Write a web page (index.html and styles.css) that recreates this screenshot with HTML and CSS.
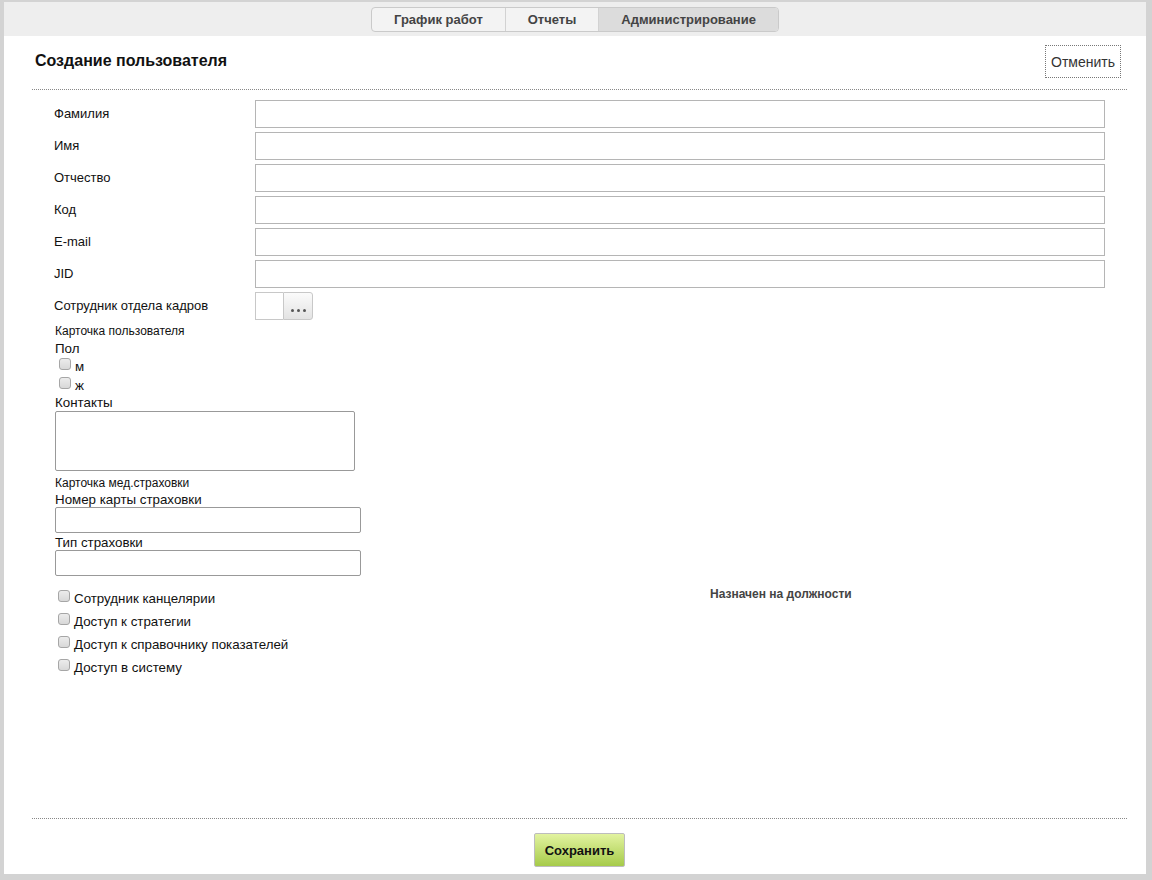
FILE: index.html
```html
<!DOCTYPE html>
<html lang="ru">
<head>
<meta charset="utf-8">
<title>Создание пользователя</title>
<link rel="stylesheet" href="styles.css">
</head>
<body>
<div class="page">
  <div class="topbar">
    <nav class="tabs">
      <a class="tab">График работ</a>
      <a class="tab">Отчеты</a>
      <a class="tab active">Администрирование</a>
    </nav>
  </div>
  <div class="content">
    <div class="head">
      <h1 class="title">Создание пользователя</h1>
      <button class="cancel">Отменить</button>
    </div>
    <div class="main">
      <div class="form">
        <div class="row"><label class="lbl">Фамилия</label><input class="field" type="text"></div>
        <div class="row"><label class="lbl">Имя</label><input class="field" type="text"></div>
        <div class="row"><label class="lbl">Отчество</label><input class="field" type="text"></div>
        <div class="row"><label class="lbl">Код</label><input class="field" type="text"></div>
        <div class="row"><label class="lbl">E-mail</label><input class="field" type="text"></div>
        <div class="row"><label class="lbl">JID</label><input class="field" type="text"></div>
        <div class="row"><label class="lbl">Сотрудник отдела кадров</label>
          <div class="picker"><span class="picker-box"></span><span class="picker-btn"><i></i><i></i><i></i></span></div>
        </div>
      </div>
      <div class="card">
        <div class="card-title">Карточка пользователя</div>
        <div class="card-label gap-pol">Пол</div>
        <div class="opts">
          <label class="opt"><input type="checkbox" class="cb">м</label>
          <label class="opt"><input type="checkbox" class="cb">ж</label>
        </div>
        <div class="card-label contacts">Контакты</div>
        <textarea class="area"></textarea>
        <div class="card-title gap-med">Карточка мед.страховки</div>
        <div class="card-label gap-small">Номер карты страховки</div>
        <input class="small-field" type="text">
        <div class="card-label gap-small">Тип страховки</div>
        <input class="small-field" type="text">
      </div>
      <div class="bottom">
        <div class="checks">
          <label class="check"><input type="checkbox" class="cb">Сотрудник канцелярии</label>
          <label class="check"><input type="checkbox" class="cb">Доступ к стратегии</label>
          <label class="check"><input type="checkbox" class="cb">Доступ к справочнику показателей</label>
          <label class="check"><input type="checkbox" class="cb">Доступ в систему</label>
        </div>
        <div class="posts">Назначен на должности</div>
      </div>
    </div>
    <div class="footer">
      <button class="save">Сохранить</button>
    </div>
  </div>
</div>
</body>
</html>
```

FILE: styles.css
```css
html, body {
  margin: 0;
  padding: 0;
}
body {
  background: #d3d3d3;
  font-family: "Liberation Sans", Arial, sans-serif;
  color: #111;
}
.page {
  margin: 2px 6px 0 4px;
  height: 872px;
  background: #fff;
  display: flex;
  flex-direction: column;
  box-sizing: border-box;
}
.topbar {
  height: 34px;
  background: #eeeeee;
  display: flex;
  justify-content: center;
  align-items: flex-start;
  padding-top: 5px;
  box-sizing: border-box;
}
.tabs {
  display: flex;
  height: 25px;
  box-sizing: border-box;
  border: 1px solid #cacaca;
  border-radius: 4px;
  overflow: hidden;
  background: #f3f3f3;
}
.tab {
  padding: 0 22px;
  font-weight: bold;
  font-size: 13px;
  line-height: 23px;
  color: #444;
  border-left: 1px solid #d2d2d2;
}
.tab:first-child {
  border-left: 0;
}
.tab.active {
  background: #dcdcdc;
}
.content {
  flex: 1;
  display: flex;
  flex-direction: column;
  padding: 0 19px 0 28px;
}
.head {
  height: 54px;
  box-sizing: border-box;
  display: flex;
  justify-content: space-between;
  align-items: flex-start;
  border-bottom: 1px dotted #888;
  padding-top: 9px;
}
.title {
  margin: 6px 0 0 3px;
  font-size: 16px;
  line-height: 20px;
  font-weight: bold;
  color: #111;
}
.cancel {
  margin: 0 6px 0 0;
  width: 76px;
  height: 33px;
  padding: 0;
  background: #fff;
  border: 1px dotted #777;
  font-family: "Liberation Sans", Arial, sans-serif;
  font-size: 14px;
  color: #333;
}
.main {
  flex: 1;
  padding: 10px 22px 0 22px;
}
.row {
  display: grid;
  grid-template-columns: 201px 1fr;
  align-items: center;
  height: 28px;
  margin-bottom: 4px;
}
.lbl {
  font-size: 13px;
  line-height: 15px;
  padding-bottom: 2px;
  color: #111;
}
.field {
  height: 28px;
  box-sizing: border-box;
  border: 1px solid #b5b5b5;
  margin: 0;
  padding: 2px 4px;
  font-size: 13px;
}
.picker {
  display: flex;
  height: 28px;
}
.picker-box {
  width: 28px;
  box-sizing: border-box;
  border: 1px solid #c8c8c8;
  border-right: 0;
  background: #fff;
}
.picker-btn {
  width: 30px;
  box-sizing: border-box;
  border: 1px solid #c8c8c8;
  border-radius: 0 3px 3px 0;
  background: linear-gradient(#fbfbfb, #e3e3e3);
  display: flex;
  align-items: flex-end;
  justify-content: center;
  gap: 3px;
  padding-bottom: 7px;
}
.picker-btn i {
  width: 3px;
  height: 3px;
  border-radius: 50%;
  background: #555;
}
.card {
  padding-left: 1px;
  margin-top: 1px;
}
.card-title {
  font-size: 12px;
  line-height: 14px;
}
.card-label {
  font-size: 13.33px;
  line-height: 15px;
}
.gap-pol {
  margin-top: 3px;
}
.gap-med {
  margin-top: 5px;
}
.gap-small {
  margin-top: 2px;
}
.opts {
  padding-top: 1px;
}
.opt {
  display: flex;
  align-items: center;
  height: 19px;
  font-size: 13.33px;
  line-height: 19px;
}
.contacts {
  margin-bottom: 1px;
}
.cb {
  appearance: none;
  -webkit-appearance: none;
  width: 12px;
  height: 12px;
  box-sizing: border-box;
  margin: 0 4px 0 4px;
  border: 1px solid #a6a6a6;
  border-radius: 3px;
  background: linear-gradient(#ececec, #d8d8d8);
}
.opt .cb {
  margin-top: -6px;
}
.area {
  display: block;
  width: 300px;
  height: 60px;
  box-sizing: border-box;
  margin: 0;
  border: 1px solid #999;
  border-radius: 2px;
  resize: none;
}
.small-field {
  display: block;
  width: 306px;
  height: 26px;
  box-sizing: border-box;
  margin: 0;
  border: 1px solid #999;
  border-radius: 2px;
}
.bottom {
  display: grid;
  grid-template-columns: 656px 1fr;
  margin-top: 11px;
}
.check {
  display: flex;
  align-items: center;
  height: 23px;
  font-size: 13.33px;
}
.check .cb {
  margin-top: -5px;
}
.posts {
  font-size: 12px;
  font-weight: bold;
  color: #444;
  margin-top: 0;
}
.footer {
  border-top: 1px dotted #888;
  height: 56px;
  box-sizing: border-box;
  display: flex;
  justify-content: center;
  padding-top: 14px;
}
.save {
  width: 91px;
  height: 34px;
  padding: 0;
  border: 1px solid #bdbdbd;
  border-radius: 2px;
  background: linear-gradient(#e2f3a0, #a6cb4a);
  font-family: "Liberation Sans", Arial, sans-serif;
  font-weight: bold;
  font-size: 13px;
  color: #111;
}
```
